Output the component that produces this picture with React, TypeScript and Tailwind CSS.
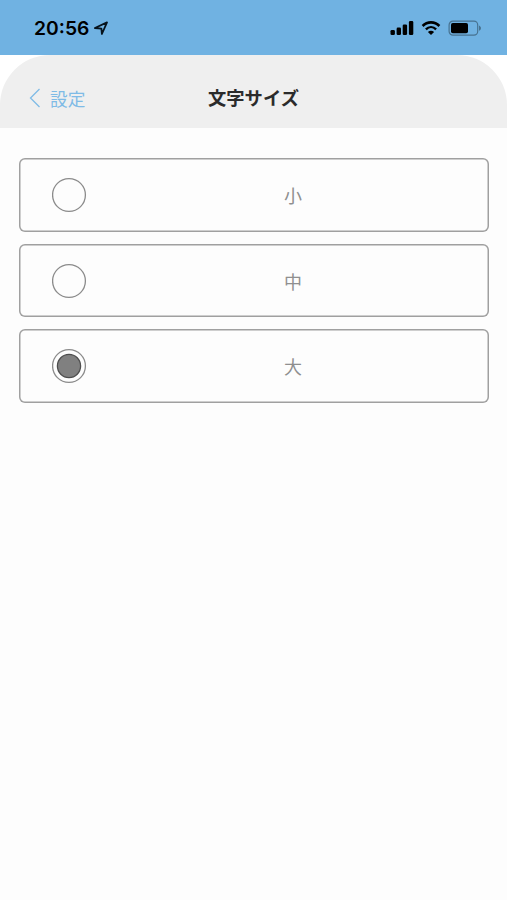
import { useState } from "react";

const SIZES = ["小", "中", "大"];

function StatusBar() {
  return (
    <div className="flex h-[54.5px] items-center justify-between bg-[#70b2e2] pt-[2px] pr-[25px] pl-[34px] text-black">
      <div className="flex items-center gap-[5px]">
        <span className="w-[55px] font-[Inter,sans-serif] text-[19.3px] leading-6 font-semibold whitespace-nowrap">20:56</span>
        <svg width="15" height="15" viewBox="0 0 15 15" className="block">
          <path d="M0.9 7 L13 1.4 L7.9 13 L7.4 7.6 Z" fill="none" stroke="#07131c" strokeWidth="1.8" strokeLinejoin="round" />
        </svg>
      </div>
      <div className="flex items-center">
        <svg width="24" height="16" viewBox="0 0 24 16">
          <rect x="0.5" y="10" width="4.4" height="5" rx="1.3" />
          <rect x="6.6" y="7.6" width="4.4" height="7.4" rx="1.3" />
          <rect x="12.7" y="4.5" width="4.4" height="10.5" rx="1.3" />
          <rect x="18.9" y="1.1" width="4.4" height="13.9" rx="1.3" />
        </svg>
        <svg width="20" height="16" viewBox="0 0 20 16" className="ml-[7px]">
          <path d="M1.6 6 C6.4 1.1 13.6 1.1 18.4 6" fill="none" stroke="#000" strokeWidth="2.6" />
          <path d="M4.9 9.4 C7.9 6.4 12.1 6.4 15.1 9.4" fill="none" stroke="#000" strokeWidth="2.4" />
          <path d="M6.9 12.1 C8.7 10.4 11.3 10.4 13.1 12.1 L10 15 Z" />
        </svg>
        <svg width="34" height="16" viewBox="0 0 34 16" className="ml-[7px]">
          <rect x="1.1" y="1.1" width="28.6" height="14" rx="3.8" fill="none" stroke="#477290" strokeWidth="1.2" />
          <rect x="3" y="3" width="17" height="10.2" rx="1.8" />
          <path d="M31 5.5 C33.6 6.6 33.6 9.7 31 10.8 Z" fill="#477290" />
        </svg>
      </div>
    </div>
  );
}

function Header() {
  return (
    <div className="bg-white">
      <header className="grid h-[73px] grid-cols-[1fr_auto_1fr] items-center rounded-t-[50px] bg-[#efefef] pt-[13px]">
        <button className="flex items-center gap-[9px] pl-[29px] text-[#7fbbe6]">
          <svg width="12" height="20" viewBox="0 0 12 20">
            <path d="M10.5 1 L1.5 10 L10.5 19" fill="none" stroke="currentColor" strokeWidth="1.3" />
          </svg>
          <span className="text-[17.7px] leading-6">設定</span>
        </button>
        <h1 className="mb-[2px] text-[18.3px] leading-6 font-bold text-[#2b2b2b]">文字サイズ</h1>
        <span />
      </header>
    </div>
  );
}

export default function App() {
  const [selected, setSelected] = useState(2);
  return (
    <div className="h-[900px] w-full overflow-hidden bg-[#fdfdfd] font-['Noto_Sans_CJK_JP',sans-serif]">
      <StatusBar />
      <Header />
      <main className="flex flex-col gap-3 pt-[30.5px] pr-[18px] pl-[19px]">
        {SIZES.map((size, index) => (
          <button
            key={size}
            onClick={() => setSelected(index)}
            className="flex h-[73.7px] w-full items-center rounded-[6px] bg-[#fdfdfd] pl-[33px] shadow-[inset_0_0_0_1.5px_#a0a0a0]"
          >
            <svg width="35" height="36" viewBox="0 0 35 36" className="shrink-0">
              <circle cx="17" cy="18" r="16.4" fill="none" stroke="#8b8b8b" strokeWidth="1.3" />
              {selected === index && <circle cx="17" cy="18" r="11.6" fill="#808080" stroke="#4d4d4d" strokeWidth="1.3" />}
            </svg>
            <span className="flex-1 pl-[10px] text-center text-[18px] leading-6 text-[#8f8f8f]">{size}</span>
          </button>
        ))}
      </main>
    </div>
  );
}
